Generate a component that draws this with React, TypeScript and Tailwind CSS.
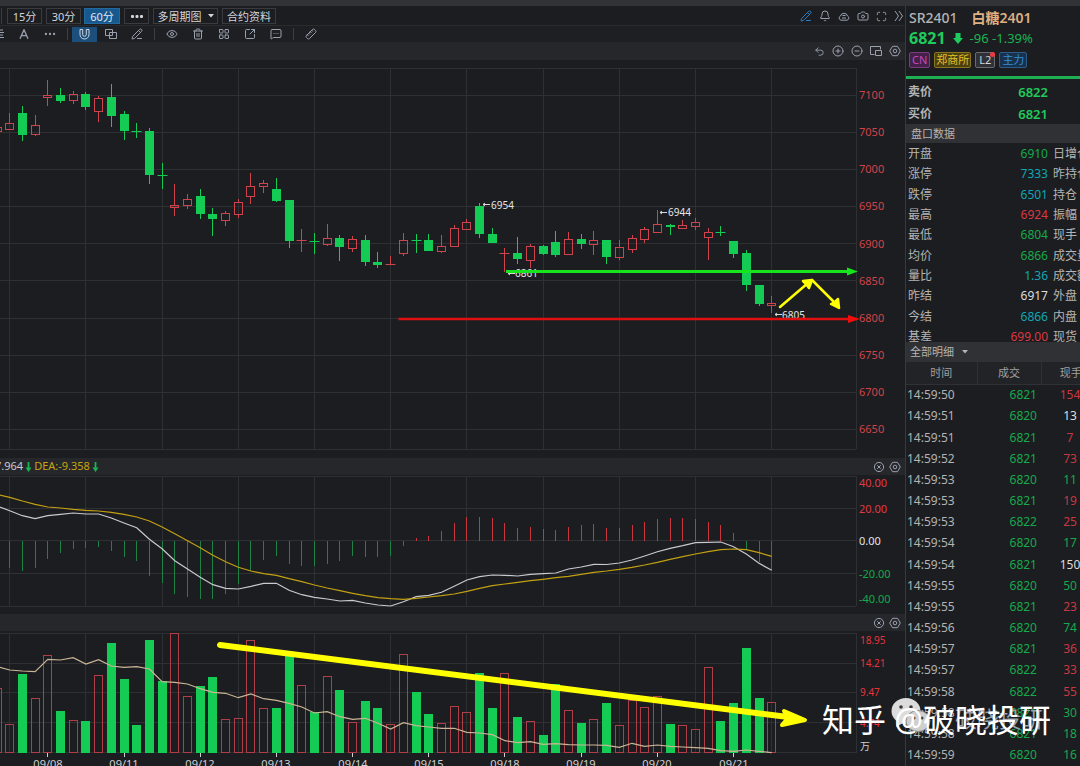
import type { ReactNode } from "react";
import {
  Bell,
  Camera,
  ChevronsRight,
  CircleMinus,
  CirclePlus,
  Ellipsis,
  Eye,
  LayoutGrid,
  Maximize,
  MessageSquareMore,
  PencilLine,
  Ruler,
  SquareArrowOutUpRight,
  Trash2,
  Undo2,
} from "lucide-react";

const RED = "#cf444c";
const GREEN = "#14cc54";
const STEP = 12.7;
const X0 = 9.7;
const px = (i: number) => X0 + STEP * i;

type Candle = ["r" | "g", number, number, number, number];

// colour, body top, body bottom, wick top, wick bottom
const candles: Candle[] = [
  ["r", 127, 131, 127, 131],
  ["r", 123, 129, 113, 129],
  ["g", 113, 135, 106, 141],
  ["r", 125, 134, 115, 136],
  ["r", 95, 97, 80, 106],
  ["g", 95, 101, 88, 103],
  ["r", 94, 100, 91, 104],
  ["g", 94, 107, 92, 110],
  ["r", 98, 111, 96, 122],
  ["g", 97, 116, 84, 127],
  ["g", 114, 131, 111, 140],
  ["g", 131, 132, 123, 138],
  ["g", 131, 175, 128, 184],
  ["g", 175, 176, 163, 189],
  ["r", 205, 207, 184, 216],
  ["r", 199, 205, 194, 209],
  ["g", 196, 214, 189, 219],
  ["g", 214, 219, 208, 236],
  ["r", 213, 220, 211, 226],
  ["r", 202, 214, 199, 218],
  ["r", 186, 196, 173, 204],
  ["r", 183, 186, 180, 193],
  ["g", 189, 201, 178, 202],
  ["g", 200, 241, 200, 248],
  ["r", 240, 241, 229, 252],
  ["g", 241, 242, 233, 254],
  ["r", 238, 244, 224, 246],
  ["g", 238, 247, 235, 261],
  ["r", 239, 248, 236, 252],
  ["g", 240, 262, 235, 266],
  ["g", 262, 265, 252, 268],
  ["r", 264, 265, 256, 265],
  ["r", 240, 253, 233, 256],
  ["g", 240, 241, 234, 253],
  ["g", 240, 251, 234, 251],
  ["r", 246, 251, 235, 253],
  ["r", 228, 246, 225, 246],
  ["r", 222, 229, 219, 229],
  ["g", 206, 234, 203, 238],
  ["g", 234, 243, 228, 243],
  ["r", 253, 254, 248, 272],
  ["g", 253, 259, 237, 264],
  ["r", 246, 260, 244, 268],
  ["g", 246, 254, 245, 255],
  ["g", 242, 255, 231, 257],
  ["r", 239, 254, 232, 254],
  ["g", 239, 244, 234, 249],
  ["r", 240, 244, 231, 255],
  ["g", 240, 257, 240, 264],
  ["r", 247, 257, 240, 260],
  ["r", 238, 249, 235, 253],
  ["r", 229, 239, 227, 243],
  ["r", 224, 232, 210, 232],
  ["g", 225, 227, 224, 235],
  ["r", 225, 228, 220, 228],
  ["r", 222, 226, 218, 230],
  ["r", 232, 237, 228, 260],
  ["g", 232, 233, 226, 236],
  ["g", 241, 254, 241, 258],
  ["g", 253, 285, 250, 291],
  ["g", 285, 304, 285, 306],
  ["r", 303, 305, 296, 313],
];

const hist = [
  568, 571, 568, 559, 553, 549, 548, 547, 551, 557, 561, 576, 583, 594, 597, 599, 599, 594, 584, 571, 560, 556, 564,
  566, 566, 564, 561, 556, 557, 557, 556, 546, 538, 536, 531, 523, 517, 517, 518, 523, 528, 527, 529, 530, 527, 525,
  524, 528, 528, 525, 522, 519, 518, 518, 519, 522, 525, 533, 549, 562, 570,
];

const dif = [
  506, 510.7, 515.7, 518.7, 515.7, 514.3, 513, 514, 514, 518, 523, 527.7, 539.3, 548.7, 560.7, 569, 577.3, 584.7,
  588.3, 589, 586.3, 583.3, 583.3, 590.3, 594.7, 597.3, 599, 601, 600.3, 603, 605, 606, 601.7, 596.7, 595.3, 592.3,
  586.3, 580, 576.7, 575, 575.3, 576, 574.3, 573.7, 573, 569, 567, 564.3, 564.5, 563, 560, 556, 551.7, 548.3, 545.7,
  542.7, 542.3, 542, 546.7, 554, 563.3, 570.3,
];

const dea = [
  494.5, 497.3, 501, 504.3, 507, 508, 509.3, 510.3, 511, 512.3, 514.3, 517, 521, 527, 533.7, 540.7, 547.7, 555.3,
  561.7, 567.3, 571, 573.7, 575.3, 578.7, 581.7, 585, 588, 590.7, 593.3, 595.7, 597.7, 598.7, 599.3, 598.3, 597, 595.7,
  594, 591.3, 588.3, 585.7, 584, 582.3, 580.7, 579.3, 577.7, 576.3, 574.3, 572.3, 571, 569.3, 567.3, 565, 562.3, 559.3,
  556.7, 554, 551.7, 549.7, 549, 549.7, 552.7, 556.3,
];

const volumeTops = [
  688, 724, 674, 698, 655, 711, 720, 721, 675, 643, 679, 725, 640, 681, 633, 696, 686, 677, 719, 718, 640, 708, 708,
  656, 685, 712, 676, 690, 722, 701, 708, 724, 654, 692, 714, 723, 706, 712, 673, 708, 673, 717, 721, 735, 684, 710,
  723, 719, 703, 725, 700, 707, 696, 724, 725, 729, 667, 721, 703, 648, 698, 702,
];

const volumeColours = "rrgrrgrgrgggggrrggrrrrggrgrgrggrrggrrrggrgrggrgrgrrrrgrrrggggr";

const volumeMa = [
  666.5, 670, 671, 671.7, 659.3, 660, 657.7, 664, 659.7, 666, 667.3, 666.7, 669, 681.7, 682.3, 684, 688.7, 692.3,
  693.3, 697.7, 694, 698.7, 700.3, 703.3, 707, 713, 711.7, 716.7, 719.3, 718.3, 723.3, 729, 722.7, 725.7, 727, 728.3,
  728.3, 732.3, 733, 734.7, 740.7, 742.7, 741.7, 744.3, 743.7, 744.7, 745, 745, 745.3, 747.3, 743.3, 746.3, 745, 746.3,
  747, 747.7, 748.3, 750.7, 751.3, 750, 751.3, 752.7,
];

const days = ["09/08", "09/11", "09/12", "09/13", "09/14", "09/15", "09/18", "09/19", "09/20", "09/21"];
const gridXs = [0, 6, 12, 18, 24, 30, 36, 42, 48, 54, 60].map((i) => Math.floor(px(i)) + 0.5);
const line = (ys: number[]) => ys.map((y, k) => `${px(k - 1).toFixed(1)},${y}`).join(" ");

function Grid({ ys, top, bottom }: { ys: number[]; top: number; bottom: number }) {
  return (
    <g stroke="#2e3034" strokeWidth="1">
      {ys.map((y) => (
        <line key={y} x1="0" x2="856" y1={y + 0.5} y2={y + 0.5} />
      ))}
      {[...gridXs, 856.5].map((x) => (
        <line key={x} x1={x} x2={x} y1={top} y2={bottom} />
      ))}
    </g>
  );
}

function CandlePane() {
  return (
    <svg
      viewBox="0 60 905 398"
      preserveAspectRatio="xMaxYMin meet"
      className="block h-[398px] w-full"
      role="img"
      aria-label="K线"
    >
      <Grid ys={[68, 95, 132, 169, 206, 243, 280, 318, 355, 392, 429, 449]} top={68} bottom={449} />
      {candles.map(([c, t, b, h, l], k) => {
        const x = Math.round(px(k - 1) - 0.5) + 0.5;
        const col = c === "r" ? RED : GREEN;
        const thin = b - t <= 1;
        return (
          <g key={k} stroke={col}>
            <line x1={x} x2={x} y1={h} y2={thin ? l : t} />
            <line x1={x} x2={x} y1={thin ? t : b} y2={l} />
            {thin ? (
              <line x1={x - 5} x2={x + 5} y1={t + 0.5} y2={t + 0.5} />
            ) : c === "g" ? (
              <rect x={x - 4.5} y={t} width="9" height={b - t} fill={GREEN} stroke="none" />
            ) : (
              <rect x={x - 4} y={t + 0.5} width="8" height={b - t} fill="none" />
            )}
          </g>
        );
      })}
      <g fill="#e6e6e6" fontSize="10">
        <text x="491" y="209">6954</text>
        <text x="668" y="216">6944</text>
        <text x="515" y="277">6861</text>
        <text x="782" y="319">6805</text>
      </g>
      <g stroke="#d8d8d8" fill="none">
        <path d="M490 204.500H483M485 203l-2 1.500 2 1.500" />
        <path d="M667 212.500H660M662 211l-2 1.500 2 1.500" />
        <path d="M515 273.500H508M510 272l-2 1.500 2 1.500" />
        <path d="M782 314.500H775M777 313l-2 1.500 2 1.500" />
      </g>
      <path d="M506 271.500H850" stroke="#17e41c" strokeWidth="3" />
      <path d="M847 267.500L858 271.500L847 275.500Z" fill="#17e41c" />
      <path d="M398.500 319H850" stroke="#e01010" strokeWidth="2.500" />
      <path d="M848 315L860 319L848 323Z" fill="#f00d0d" />
      <g stroke="#ffff00" strokeWidth="2.500" strokeLinecap="round" strokeLinejoin="round" fill="#ffff00">
        <path d="M780 307L808 283" />
        <path d="M803 281L812 280L809 288L806 284Z" />
        <path d="M812 280L837 305" />
        <path d="M831 304L839 308L838 299L835 302Z" />
      </g>
      <g fill={RED} fontSize="11">
        {[7100, 7050, 7000, 6950, 6900, 6850, 6800, 6750, 6700, 6650].map((p, i) => (
          <text key={p} x="859" y={99 + Math.round(i * 37.15)}>
            {p}
          </text>
        ))}
      </g>
    </svg>
  );
}

function MacdPane() {
  return (
    <svg
      viewBox="0 475 905 139"
      preserveAspectRatio="xMaxYMin meet"
      className="block h-[139px] w-full"
      role="img"
      aria-label="MACD"
    >
      <Grid ys={[476, 508, 540, 573, 606]} top={476} bottom={606} />
      {hist.map((y, i) => {
        const x = Math.round(px(i) - 0.5) + 0.5;
        return <line key={i} x1={x} x2={x} y1="541" y2={y} stroke={y > 541 ? "#1f8244" : "#c9363e"} />;
      })}
      <polyline points={line(dif)} fill="none" stroke="#c9c9d0" strokeWidth="1.200" />
      <polyline points={line(dea)} fill="none" stroke="#c2a012" strokeWidth="1.200" />
      <g fontSize="11">
        <text x="859" y="487" fill="#e03a42">40.00</text>
        <text x="859" y="513" fill="#e03a42">20.00</text>
        <text x="859" y="545" fill="#e2e2e2">0.00</text>
        <text x="859" y="578" fill="#16a94b">-20.00</text>
        <text x="859" y="603" fill="#16a94b">-40.00</text>
      </g>
    </svg>
  );
}

function VolumePane() {
  return (
    <svg
      viewBox="0 631 905 135"
      preserveAspectRatio="xMaxYMin meet"
      className="block h-[135px] w-full"
      role="img"
      aria-label="成交量"
    >
      <Grid ys={[633, 663, 692, 722, 752]} top={633} bottom={753} />
      {volumeTops.map((y, k) => {
        const x = Math.round(px(k - 1) - 0.5) + 0.5;
        return volumeColours[k] === "g" ? (
          <rect key={k} x={x - 4.5} y={y} width="9" height={753 - y} fill={GREEN} />
        ) : (
          <rect key={k} x={x - 4} y={y + 0.5} width="8" height={752 - y} fill="none" stroke="#b03e46" />
        );
      })}
      <polyline points={line(volumeMa)} fill="none" stroke="#cbb596" strokeWidth="1.200" />
      <g fill="#d0d0d0" fontSize="11" textAnchor="middle">
        {days.map((d, i) => (
          <g key={d}>
            <rect x={Math.floor(px(3 + 6 * i))} y="753" width="1" height="4" />
            <text x={Math.round(px(3 + 6 * i))} y="768">
              {d}
            </text>
          </g>
        ))}
      </g>
      <g fontSize="10" fill="#e8323c">
        <text x="860" y="644">18.95</text>
        <text x="860" y="667">14.21</text>
        <text x="860" y="696">9.47</text>
        <text x="860" y="727">4.74</text>
        <text x="860" y="750" fill="#d0d0d0">万</text>
      </g>
      <g stroke="#ffff00" strokeLinecap="round" strokeLinejoin="round" fill="#ffff00">
        <path d="M220 645L788 717" strokeWidth="6" />
        <path d="M784 711L805 720L782 725L788 718Z" strokeWidth="4" />
      </g>
    </svg>
  );
}

function IconButton({ label, active, children }: { label: string; active?: boolean; children: ReactNode }) {
  return (
    <button
      aria-label={label}
      className={
        active
          ? "flex h-[15px] w-[25px] items-center justify-center bg-[#1c4f7c] text-gray-300"
          : "flex h-[15px] w-[25px] items-center justify-center text-gray-400"
      }
    >
      {children}
    </button>
  );
}

function HexSettings() {
  return (
    <svg viewBox="0 0 12 12" className="size-3" fill="none" stroke="currentColor">
      <path d="M3.500 1.300h5L11.300 6 8.500 10.700h-5L.7 6Z" />
      <circle cx="6" cy="6" r="1.800" />
    </svg>
  );
}

function CircleClose() {
  return (
    <svg viewBox="0 0 12 12" className="size-3" fill="none" stroke="currentColor">
      <circle cx="6" cy="6" r="4.600" />
      <path d="M4.300 4.300l3.400 3.400M7.700 4.300L4.300 7.700" />
    </svg>
  );
}

function PaneBar({ children }: { children?: ReactNode }) {
  return (
    <div className="flex h-[17px] items-center justify-between bg-[#26272b] pr-1 text-[11px]">
      <div className="flex items-center gap-[2px]">{children}</div>
      <div className="flex gap-1 text-gray-400">
        <button aria-label="关闭指标">
          <CircleClose />
        </button>
        <button aria-label="指标设置">
          <HexSettings />
        </button>
      </div>
    </div>
  );
}

function DownArrow() {
  return (
    <svg viewBox="0 0 7 10" className="h-[10px] w-[7px]" fill="#1bb351">
      <path d="M2.600 0h1.800v5.500H6.500L3.500 10 .5 5.500h2.100Z" />
    </svg>
  );
}

function Divider() {
  return <span className="mr-[3px] ml-1 h-3 w-px bg-[#3d3f44]" />;
}

const periodClass =
  "flex h-4 items-center justify-center border border-[#3a3b3f] text-[11px] leading-none whitespace-nowrap text-gray-300";

function Toolbar() {
  return (
    <>
      <div className="flex h-[19px] items-center justify-between bg-[#1b1d20] pt-px pr-px">
        <div className="flex items-center">
          <span className="mr-[5px] h-4 w-[2px] border-r border-[#3a3b3f]" />
          <button className={`${periodClass} mr-1 w-[35px]`}>15分</button>
          <button className={`${periodClass} mr-[3px] w-[35px]`}>30分</button>
          <button className="mr-1 flex h-4 w-9 items-center justify-center border border-[#2468a0] bg-[#17588f] text-[11px] leading-none text-gray-200">
            60分
          </button>
          <button aria-label="更多周期" className={`${periodClass} mr-1 w-[25px]`}>
            <svg viewBox="0 0 12 3" className="h-[3px] w-3" fill="currentColor">
              <rect width="3" height="3" rx="1" />
              <rect x="4.500" width="3" height="3" rx="1" />
              <rect x="9" width="3" height="3" rx="1" />
            </svg>
          </button>
          <button className={`${periodClass} mr-1 w-[65px] gap-[6px]`}>
            多周期图
            <svg viewBox="0 0 6 4" className="h-1 w-[6px]" fill="currentColor">
              <path d="M0 0h6L3 3.500Z" />
            </svg>
          </button>
          <button className={`${periodClass} w-[54px]`}>合约资料</button>
        </div>
        <div className="flex items-center gap-[7px] text-gray-400">
          <button aria-label="画线" className="text-[#2b7cc0]">
            <PencilLine className="size-3" />
          </button>
          <button aria-label="预警">
            <Bell className="size-3" />
          </button>
          <button aria-label="云端">
            <svg viewBox="0 0 12 12" className="size-3" fill="none" stroke="currentColor">
              <path d="M3 10.200a2.200 2.200 0 0 1-.5-4.200 3.600 3.600 0 0 1 7 0 2.200 2.200 0 0 1-.5 4.200ZM4.500 5.500h3M4 8h4" />
            </svg>
          </button>
          <button aria-label="截图">
            <Camera className="size-3" />
          </button>
          <button aria-label="全屏">
            <Maximize className="size-[11px]" />
          </button>
          <button aria-label="展开">
            <svg viewBox="0 0 10 12" className="h-3 w-[10px]" fill="none" stroke="currentColor">
              <path d="M1 1l3.500 5L1 11M5 1l3.500 5L5 11" />
            </svg>
          </button>
        </div>
      </div>
      <div className="flex h-[17px] items-center gap-px border-t border-[#2a2b2f] bg-[#1e1f23]">
        <span className="flex w-[10px] items-center text-gray-400">
          <svg viewBox="0 0 4 10" className="h-[10px] w-1" stroke="currentColor">
            <path d="M0 1h3M0 3.500h4M0 6h3M0 8.500h4" />
          </svg>
        </span>
        <IconButton label="文字">
          <svg viewBox="0 0 10 10" className="size-[10px]" fill="none" stroke="currentColor" strokeWidth="1.300">
            <path d="M1 9.700L5 .7l4 9M2.400 6.700h5.200" />
          </svg>
        </IconButton>
        <IconButton label="更多画线">
          <Ellipsis className="size-[14px]" strokeWidth={2} />
        </IconButton>
        <Divider />
        <IconButton label="磁吸" active>
          <svg viewBox="0 0 11 11" className="size-[11px]" fill="none" stroke="currentColor">
            <path d="M1 .500v5a4.500 4.500 0 0 0 9 0v-5H7.300v5a1.800 1.800 0 0 1-3.600 0v-5Z" />
          </svg>
        </IconButton>
        <IconButton label="复制">
          <svg viewBox="0 0 12 12" className="size-3" fill="none" stroke="currentColor">
            <path d="M.5 1.500h7v6h-7ZM4.500 4.500h7v6h-7Z" />
          </svg>
        </IconButton>
        <IconButton label="编辑">
          <PencilLine className="size-3" />
        </IconButton>
        <Divider />
        <IconButton label="显示">
          <Eye className="size-3" />
        </IconButton>
        <IconButton label="删除">
          <Trash2 className="size-3" />
        </IconButton>
        <IconButton label="画线管理">
          <LayoutGrid className="size-3" />
        </IconButton>
        <IconButton label="导出">
          <SquareArrowOutUpRight className="size-3" />
        </IconButton>
        <IconButton label="备注">
          <MessageSquareMore className="size-3" />
        </IconButton>
        <Divider />
        <IconButton label="测量">
          <Ruler className="size-3 -scale-x-100" />
        </IconButton>
      </div>
      <div className="flex h-[18px] items-center justify-end gap-[7px] bg-[#26272b] pr-1 text-gray-400">
        <button aria-label="撤销">
          <Undo2 className="size-[11px]" />
        </button>
        <button aria-label="放大">
          <CirclePlus className="size-3" />
        </button>
        <button aria-label="缩小">
          <CircleMinus className="size-3" />
        </button>
        <button aria-label="弹出窗口">
          <svg viewBox="0 0 12 12" className="size-3" fill="none" stroke="currentColor">
            <path d="M4.500 9.500h-4v-8h10v3M5.500 5.500h6v5h-6Z" />
          </svg>
        </button>
        <button aria-label="图表设置">
          <HexSettings />
        </button>
      </div>
    </>
  );
}

const stats: [string, string, string, string][] = [
  ["开盘", "6910", "text-[#17a94c]", "日增仓"],
  ["涨停", "7333", "text-[#10a5b4]", "昨持仓"],
  ["跌停", "6501", "text-[#10a5b4]", "持仓"],
  ["最高", "6924", "text-[#dc3840]", "振幅"],
  ["最低", "6804", "text-[#17a94c]", "现手"],
  ["均价", "6866", "text-[#17a94c]", "成交量"],
  ["量比", "1.36", "text-[#10a5b4]", "成交额"],
  ["昨结", "6917", "text-[#dedede]", "外盘"],
  ["今结", "6866", "text-[#10a5b4]", "内盘"],
  ["基差", "699.00", "text-[#dc3840]", "现货"],
];

const R = "text-[#c93840]";
const G = "text-[#17a94c]";
const W = "text-[#dedede]";
const ticks: [string, string, string, string][] = [
  ["14:59:50", "6821", "154", R],
  ["14:59:51", "6820", "13", W],
  ["14:59:51", "6821", "7", R],
  ["14:59:52", "6821", "73", R],
  ["14:59:53", "6820", "11", G],
  ["14:59:53", "6821", "19", R],
  ["14:59:53", "6822", "25", R],
  ["14:59:54", "6820", "17", G],
  ["14:59:54", "6821", "150", W],
  ["14:59:55", "6820", "50", G],
  ["14:59:55", "6821", "23", R],
  ["14:59:56", "6820", "74", G],
  ["14:59:57", "6821", "36", R],
  ["14:59:57", "6822", "33", R],
  ["14:59:58", "6822", "55", R],
  ["14:59:58", "6821", "30", G],
  ["14:59:58", "6821", "18", G],
  ["14:59:59", "6820", "16", G],
];

function QuotePanel() {
  return (
    <aside className="w-[175px] shrink-0 overflow-hidden border-l border-[#37393d] bg-[#1b1d20] text-xs leading-4 text-[#b4b4b4]">
      <div className="h-[73px] border-b-3 border-[#1fae54] pl-[3px] whitespace-nowrap">
        <div className="flex gap-[14px] pt-[3px] text-sm leading-[18px]">
          <h1 className="font-medium">SR2401</h1>
          <span className="font-semibold text-[#deb084]">白糖2401</span>
        </div>
        <div className="flex h-[22px] items-center text-[#1bb351]">
          <strong className="text-base text-[#1fcb5c]">6821</strong>
          <svg viewBox="0 0 10 11" className="mx-[7px] h-[11px] w-[10px]" fill="#1fcb5c">
            <path d="M2.500 0h5v5H10L5 11 0 5h2.500Z" />
          </svg>
          <span className="text-[13px]">-96 -1.39%</span>
        </div>
        <div className="flex gap-1 pt-[3px] text-[11px] leading-[14px]">
          <span className="rounded-xs border border-[#7b3a7c] bg-[#44214a] px-[2px] text-[#c24bb8]">CN</span>
          <span className="rounded-xs border border-[#8a7420] bg-[#4b400f] px-px text-[#e5c02c]">郑商所</span>
          <span className="relative rounded-xs border border-[#6a6b70] bg-[#303136] px-[3px] text-gray-300">
            L2
            <i className="absolute -top-px -right-px size-[5px] rounded-full bg-[#f0393f]" />
          </span>
          <span className="rounded-xs border border-[#2c5c8c] bg-[#18324d] px-[2px] text-[#3a8cd8]">主力</span>
        </div>
      </div>
      <dl className="grid grid-cols-[1fr_auto] gap-y-[6px] pt-[5px] pr-8 pb-[2px] pl-[2px] font-semibold">
        <dt>卖价</dt>
        <dd className="text-[13px] text-[#1fcb5c]">6822</dd>
        <dt>买价</dt>
        <dd className="text-[13px] text-[#1fcb5c]">6821</dd>
      </dl>
      <h2 className="h-[19px] bg-[#303135] pl-[5px] text-[11px] leading-[19px]">盘口数据</h2>
      <div className="h-[199px] overflow-hidden pt-px">
        <table className="h-[203px] w-[194px] table-fixed border-collapse">
          <tbody>
            {stats.map(([name, value, colour, next]) => (
              <tr key={name}>
                <th scope="row" className="w-[42px] py-0 pl-[2px] text-left font-normal">
                  {name}
                </th>
                <td className={`w-[100px] text-right ${colour}`}>{value}</td>
                <th scope="row" className="pl-[5px] text-left font-normal">
                  {next}
                </th>
              </tr>
            ))}
          </tbody>
        </table>
      </div>
      <button className="flex h-5 w-full items-center gap-2 bg-[#303135] pl-1 text-[11px]">
        全部明细
        <svg viewBox="0 0 6 4" className="h-1 w-[6px]" fill="currentColor">
          <path d="M0 0h6L3 3.500Z" />
        </svg>
      </button>
      <table className="h-[404px] w-[194px] table-fixed border-collapse">
        <thead>
          <tr className="h-[22px] border-b border-[#303135] bg-[#222327] text-[11px] text-[#a0a0a0]">
            <th className="w-[71px] border-r border-[#303135] font-normal">时间</th>
            <th className="w-16 border-r border-[#303135] font-normal">成交</th>
            <th className="font-normal">现手</th>
          </tr>
        </thead>
        <tbody>
          {ticks.map(([time, price, lots, colour], i) => (
            <tr key={i}>
              <td className="pl-px">{time}</td>
              <td className="pr-1 text-right text-[#17a94c]">{price}</td>
              <td className={`pr-px text-center ${colour}`}>{lots}</td>
            </tr>
          ))}
        </tbody>
      </table>
    </aside>
  );
}

function Watermark() {
  return (
    <div className="pointer-events-none absolute right-[29px] bottom-[26px] flex items-center text-[32px] leading-10 whitespace-nowrap text-white">
      <span className="absolute right-[8px] bottom-[6px] flex items-center text-[22px] leading-8 text-gray-400">
        破晓投研
      </span>
      <svg viewBox="0 0 42 36" className="absolute bottom-[7px] left-[68px] h-9 w-[42px]">
        <ellipse cx="16" cy="14" rx="14.500" ry="13" fill="#dcdcdc" />
        <ellipse cx="28" cy="24" rx="12" ry="10.500" fill="#cfcfcf" stroke="#8a8a8a" />
        <path d="M7 24l-1 6 7-4Z" fill="#dcdcdc" />
        <g fill="#3a3a3a">
          <circle cx="11" cy="10" r="1.800" />
          <circle cx="21" cy="10" r="1.800" />
          <circle cx="24" cy="21" r="1.500" />
          <circle cx="32" cy="21" r="1.500" />
        </g>
      </svg>
      <span className="relative">知乎 @破晓投研</span>
    </div>
  );
}

export default function App() {
  return (
    <div className="relative flex min-h-screen flex-col overflow-hidden bg-[#1b1d20] font-['Noto_Sans','Noto_Sans_CJK_SC',sans-serif]">
      <div className="h-[6px] bg-[#323337]" />
      <div className="flex">
        <main className="min-w-0 flex-1">
          <Toolbar />
          <CandlePane />
          <PaneBar>
            <span className="-ml-[5px] text-[#c9c9d0]">7.964</span>
            <DownArrow />
            <span className="text-[#c9a412]">DEA:-9.358</span>
            <DownArrow />
          </PaneBar>
          <MacdPane />
          <PaneBar />
          <VolumePane />
        </main>
        <QuotePanel />
      </div>
      <Watermark />
    </div>
  );
}
